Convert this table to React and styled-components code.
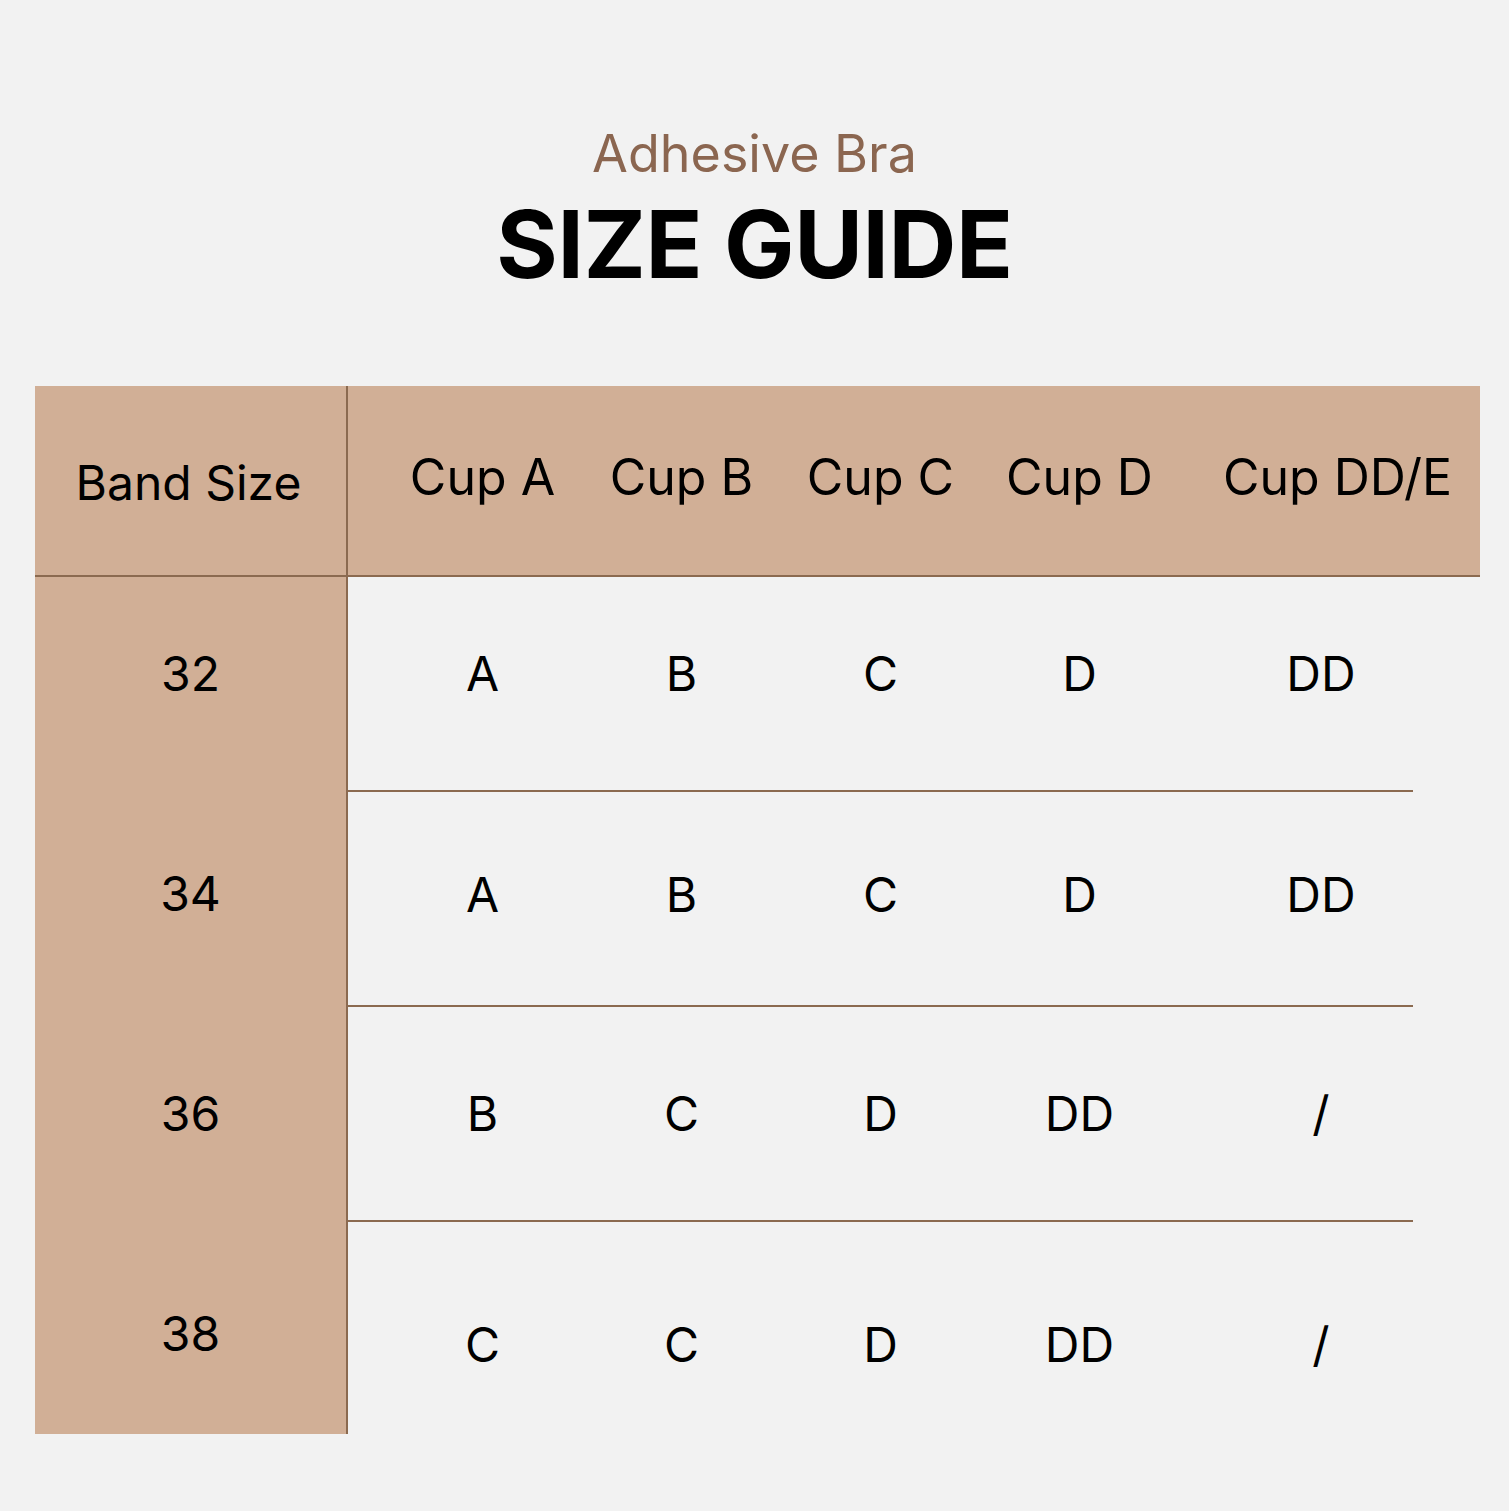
import React from 'react';
import styled, { createGlobalStyle } from 'styled-components';

const GlobalStyle = createGlobalStyle`
  body {
    margin: 0;
    background: #f2f2f2;
    font-family: Inter, "Noto Sans", sans-serif;
    color: #000;
  }
`;

const Page = styled.div`
  width: 1509px;
  height: 1511px;
  padding-top: 128px;
  box-sizing: border-box;
`;

const Subtitle = styled.h2`
  margin: 0;
  text-align: center;
  font-size: 52px;
  line-height: 1;
  font-weight: 400;
  color: #8b6650;
`;

const Title = styled.h1`
  margin: 17px 0 0;
  text-align: center;
  font-size: 94px;
  line-height: 1;
  font-weight: 700;
  letter-spacing: -0.4px;
`;

const Table = styled.div`
  margin: 95px 0 0 35px;
  width: 1445px;
`;

const Header = styled.div`
  display: grid;
  grid-template-columns: 313px 1fr;
  height: 191px;
  box-sizing: border-box;
  background: #d1af96;
  border-bottom: 2px solid #8b6a50;
`;

const BandHead = styled.div`
  display: flex;
  align-items: center;
  justify-content: center;
  border-right: 2px solid #8b6a50;
  font-size: 48px;
  padding: 4px 4px 0 0;
`;

const CupHeads = styled.div`
  display: grid;
  grid-template-columns: repeat(4, 199px) 1fr;
  padding-left: 35px;
  align-items: center;
`;

const CupHead = styled.div`
  text-align: center;
  font-size: 50px;
  padding-left: ${p => (p.$last ? '16px' : '0')};
  margin-top: -8px;
`;

const Body = styled.div`
  display: grid;
  grid-template-columns: 313px 1fr;
`;

const BandColumn = styled.div`
  display: flex;
  flex-direction: column;
  align-items: center;
  gap: 162px;
  padding-top: 68px;
  height: 857px;
  box-sizing: border-box;
  background: #d1af96;
  border-right: 2px solid #8b6a50;
`;

const Band = styled.div`
  font-size: 48px;
  line-height: 58px;
  height: 58px;
`;

const Rows = styled.div`
  width: 1065px;
`;

const Row = styled.div`
  display: grid;
  grid-template-columns: repeat(4, 199px) 1fr;
  padding-left: 35px;
  height: ${p => (p.$last ? '212px' : '215px')};
  box-sizing: border-box;
  align-items: center;
  border-bottom: ${p => (p.$last ? 'none' : '2px solid #8b6a50')};
  padding-top: ${p => Math.max(0, p.$offset * 2)}px;
  padding-bottom: ${p => Math.max(0, -p.$offset * 2)}px;
`;

const Cell = styled.div`
  text-align: center;
  font-size: 48px;
  line-height: 58px;
  padding-left: ${p => (p.$last ? '50px' : '0')};
`;

const cups = ['Cup A', 'Cup B', 'Cup C', 'Cup D', 'Cup DD/E'];
const rows = [
  { band: '32', sizes: ['A', 'B', 'C', 'D', 'DD'], offset: -10 },
  { band: '34', sizes: ['A', 'B', 'C', 'D', 'DD'], offset: -3.5 },
  { band: '36', sizes: ['B', 'C', 'D', 'DD', '/'], offset: 0 },
  { band: '38', sizes: ['C', 'C', 'D', 'DD', '/'], offset: 17 },
];

export default function App() {
  return (
    <Page>
      <GlobalStyle />
      <Subtitle>Adhesive Bra</Subtitle>
      <Title>SIZE GUIDE</Title>
      <Table>
        <Header>
          <BandHead>Band Size</BandHead>
          <CupHeads>
            {cups.map((c, i) => (
              <CupHead key={c} $last={i === cups.length - 1}>{c}</CupHead>
            ))}
          </CupHeads>
        </Header>
        <Body>
          <BandColumn>
            {rows.map(r => (
              <Band key={r.band}>{r.band}</Band>
            ))}
          </BandColumn>
          <Rows>
            {rows.map((r, ri) => (
              <Row key={r.band} $offset={r.offset} $last={ri === rows.length - 1}>
                {r.sizes.map((s, i) => (
                  <Cell key={i} $last={i === r.sizes.length - 1}>{s}</Cell>
                ))}
              </Row>
            ))}
          </Rows>
        </Body>
      </Table>
    </Page>
  );
}
